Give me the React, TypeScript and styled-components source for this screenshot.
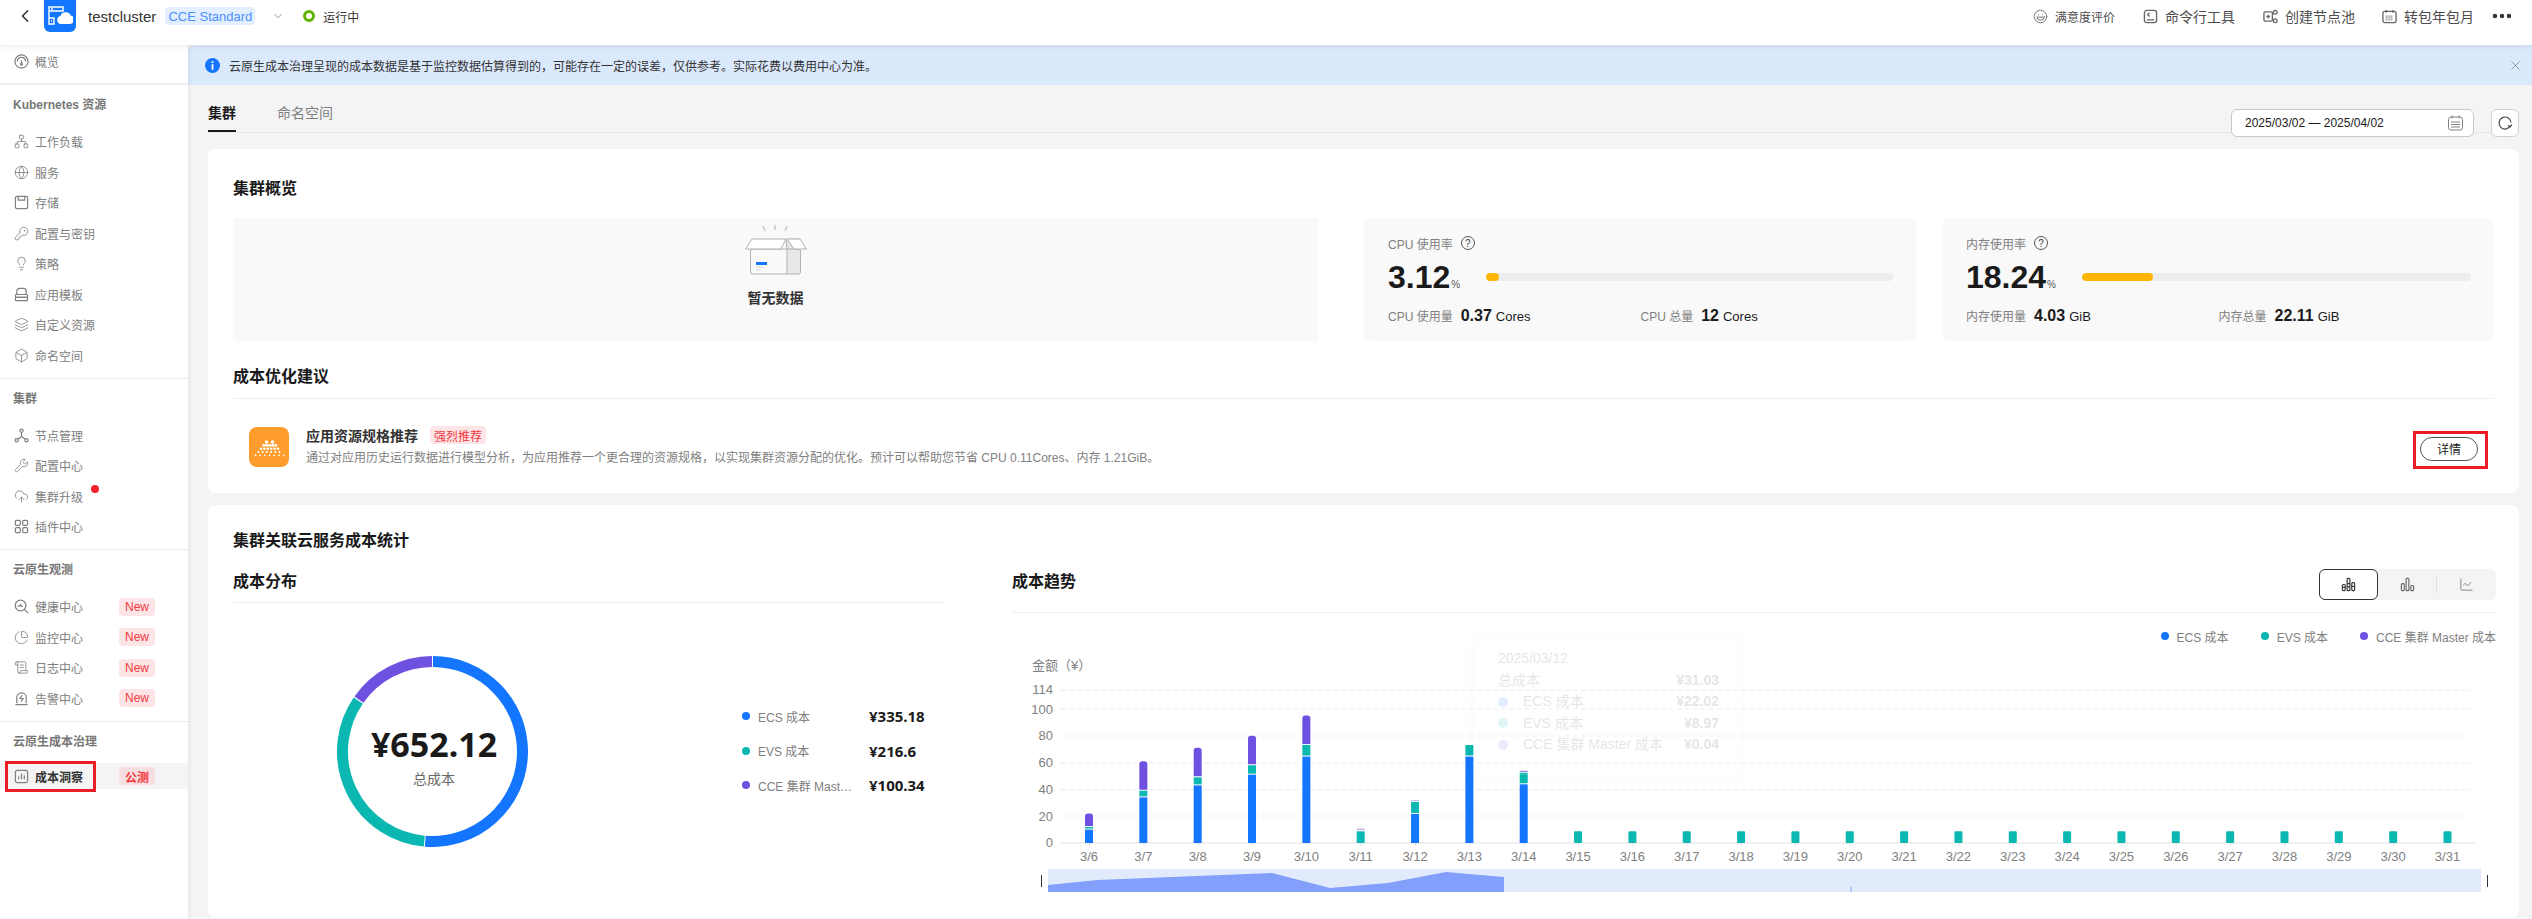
import * as React from 'react';
import styled, { createGlobalStyle } from 'styled-components';
import {
  Box,
  ChevronDown,
  ChevronLeft,
  ChartLine,
  ChartPie,
  CloudUpload,
  Ellipsis,
  Globe,
  KeyRound,
  Laugh,
  Layers,
  Lightbulb,
  Network,
  ScrollText,
  Wrench,
  X,
} from 'lucide-react';

const BLUE = '#1476ff';
const TEAL = '#0bb8b1';
const PURPLE = '#6e51e0';

const GlobalStyle = createGlobalStyle`
  html, body {
    margin: 0;
    padding: 0;
    height: 100%;
    overflow: hidden;
    background: #f4f4f4;
    font-family: "Liberation Sans", "Noto Sans CJK SC", sans-serif;
    font-size: 12px;
    color: #1a1a1a;
  }
  * {
    box-sizing: border-box;
  }
`;

const Page = styled.div`
  display: flex;
  flex-direction: column;
  height: 919px;
  overflow: hidden;
`;

/* top bar */

const TopBar = styled.header`
  display: flex;
  align-items: flex-start;
  flex: none;
  height: 45px;
  padding: 0 18px 0 15px;
  background: #fff;
  box-shadow: 0 2px 6px rgba(0, 0, 0, 0.07);
  position: relative;
  z-index: 5;
`;

const TopLeft = styled.div`
  display: flex;
  align-items: center;
  height: 32px;
  color: #333;
`;

const LogoTile = styled.div`
  display: flex;
  align-items: center;
  justify-content: center;
  width: 32px;
  height: 32px;
  margin: 0 12px 0 9px;
  background: ${BLUE};
  border-radius: 0 0 6px 6px;
`;

const ClusterName = styled.span`
  font-size: 15px;
  color: #333;
`;

const EditionTag = styled.span`
  display: inline-flex;
  align-items: center;
  justify-content: center;
  width: 90px;
  height: 18px;
  margin: 0 16px 0 9px;
  border-radius: 4px;
  background: #e3eeff;
  color: #4a90ff;
  font-size: 13px;
`;

const StatusRing = styled.span`
  width: 12px;
  height: 12px;
  margin: 0 8px 0 18px;
  border: 3px solid #5fb400;
  border-radius: 50%;
`;

const TopRight = styled.div`
  display: flex;
  align-items: center;
  height: 32px;
  margin-left: auto;
  color: #4d4d4d;
`;

const TopAction = styled.span<{ $small?: boolean; $gap?: number }>`
  display: inline-flex;
  align-items: center;
  gap: 7px;
  margin-right: ${(p) => p.$gap ?? 27}px;
  font-size: ${(p) => (p.$small ? 12 : 14)}px;
  white-space: nowrap;

  svg {
    width: 15px;
    height: 15px;
    color: #666;
    stroke-width: 1.4;
  }
`;

/* sidebar */

const Body = styled.div`
  display: flex;
  flex: 1;
  min-height: 0;
`;

const Sidebar = styled.nav`
  flex: none;
  width: 188px;
  background: #fff;
  box-shadow: 1px 0 4px rgba(0, 0, 0, 0.07);
  position: relative;
  z-index: 2;
`;

const SideTop = styled.div`
  height: 40px;
  padding-top: 1px;
  border-bottom: 2px solid #f0f0f0;
`;

const SideGroup = styled.div<{ $last?: boolean }>`
  padding: 10px 0 7px;
  border-bottom: ${(p) => (p.$last ? 'none' : '1px solid #ececec')};
`;

const SideHeading = styled.div`
  height: 20px;
  margin-bottom: 11.5px;
  padding-left: 13px;
  font-weight: 700;
  line-height: 20px;
  color: #777;
`;

const SideItem = styled.div<{ $active?: boolean }>`
  display: grid;
  grid-template-columns: 15px 84px 36px;
  column-gap: 6px;
  align-items: center;
  position: relative;
  height: ${(p) => (p.$active ? '26px' : '30.5px')};
  margin-top: ${(p) => (p.$active ? '3.5px' : 0)};
  padding-left: 14px;
  background: ${(p) => (p.$active ? '#f4f4f4' : 'transparent')};
  color: ${(p) => (p.$active ? '#333' : '#808080')};
  font-weight: ${(p) => (p.$active ? 700 : 400)};

  svg {
    width: 15px;
    height: 15px;
    color: #808080;
    stroke-width: 1.3;
  }
`;

const SideName = styled.span`
  grid-column: 2;
  white-space: nowrap;
  position: relative;
`;

const SideBadge = styled.span<{ $dim?: boolean }>`
  display: inline-flex;
  align-items: center;
  justify-content: center;
  width: 36px;
  height: 18px;
  margin-left: -6px;
  border-radius: 4px;
  background: ${(p) => (p.$dim ? '#f5dfe0' : '#fde4e6')};
  color: #f5393f;
  font-size: 12px;
  font-weight: ${(p) => (p.$dim ? 700 : 400)};
`;

const AlertDot = styled.span`
  position: absolute;
  top: -3px;
  left: 56px;
  width: 8px;
  height: 8px;
  border-radius: 50%;
  background: #f5222d;
`;

const Callout = styled.span<{ $left: number; $top: number; $w: number; $h: number }>`
  position: absolute;
  left: ${(p) => p.$left}px;
  top: ${(p) => p.$top}px;
  width: ${(p) => p.$w}px;
  height: ${(p) => p.$h}px;
  border: 3px solid #ec1c24;
  pointer-events: none;
`;

/* main */

const Main = styled.main`
  flex: 1;
  min-width: 0;
  background: #f4f4f4;
`;

const Banner = styled.div`
  display: flex;
  align-items: center;
  height: 40px;
  padding: 0 9px 0 17px;
  background: #dbe9fd;
  border-top-left-radius: 6px;
  color: #333;

  & > span {
    margin-left: 9px;
    flex: 1;
  }
`;

const Content = styled.div`
  padding: 0 13px 0 20px;
`;

const TabRow = styled.div`
  display: flex;
  align-items: flex-start;
  justify-content: space-between;
  height: 48px;
  padding-top: 17px;
  border-bottom: 1px solid #e8e8e8;
`;

const Tabs = styled.div`
  display: flex;
  gap: 41px;
`;

const Tab = styled.div<{ $active?: boolean }>`
  height: 30px;
  padding-bottom: 6px;
  border-bottom: 2px solid ${(p) => (p.$active ? '#1a1a1a' : 'transparent')};
  font-size: 14px;
  line-height: 22px;
  font-weight: ${(p) => (p.$active ? 700 : 400)};
  color: ${(p) => (p.$active ? '#1a1a1a' : '#808080')};
`;

const DateTools = styled.div`
  display: flex;
  gap: 17px;
  margin-top: 7px;
`;

const DateInput = styled.div`
  display: flex;
  align-items: center;
  justify-content: space-between;
  width: 243px;
  height: 28px;
  padding: 0 10px 0 13px;
  background: #fff;
  border: 1px solid #c8c8c8;
  border-radius: 6px;
  font-size: 12px;
  color: #1a1a1a;
`;

const RefreshButton = styled.div`
  display: flex;
  align-items: center;
  justify-content: center;
  width: 28px;
  height: 28px;
  background: #fff;
  border: 1px solid #d0d0d0;
  border-radius: 6px;
`;

const Card = styled.section`
  margin-top: 12px;
  padding: 24px 25px 0;
  background: #fff;
  border-radius: 8px;
`;

const TopCard = styled(Card)`
  margin-top: 16px;
  height: 344px;
  padding-top: 28px;
`;

const BottomCard = styled(Card)`
  height: 413px;
`;

const CardTitle = styled.h2`
  margin: 0;
  font-size: 16px;
  line-height: 24px;
  font-weight: 700;
  color: #1a1a1a;
`;

const OverviewRow = styled.div`
  display: flex;
  gap: 26px;
  margin-top: 17px;
  height: 123px;
`;

const EmptyPanel = styled.div`
  display: flex;
  flex-direction: column;
  align-items: center;
  flex: none;
  width: 1085px;
  margin-right: 20px;
  padding-top: 7px;
  background: #f9f9f9;
  border-radius: 2px;
`;

const EmptyText = styled.div`
  margin-top: 13px;
  font-size: 14px;
  font-weight: 700;
  line-height: 20px;
  color: #333;
`;

const MetricCard = styled.div`
  flex: 1;
  padding: 16px 23px 0 24px;
  background: #f9f9f9;
  border-radius: 8px;
`;

const MetricLabel = styled.div`
  display: flex;
  align-items: center;
  gap: 8px;
  height: 18px;
  color: #808080;
`;

const HelpMark = styled.span`
  display: inline-flex;
  align-items: center;
  justify-content: center;
  width: 14px;
  height: 14px;
  border: 1px solid #555;
  border-radius: 50%;
  font-size: 10px;
  color: #444;
`;

const MetricMain = styled.div`
  display: flex;
  align-items: center;
  gap: 26px;
  height: 36px;
  margin-top: 7px;
`;

const BigValue = styled.div`
  display: flex;
  align-items: flex-end;
  flex: none;
  font-size: 32px;
  font-weight: 700;
  line-height: 36px;
  color: #1a1a1a;

  small {
    margin: 0 0 5px 1px;
    font-size: 10px;
    line-height: 10px;
    font-weight: 400;
    color: #555;
  }
`;

const BarTrack = styled.div`
  flex: 1;
  height: 8px;
  background: #ededed;
  border-radius: 4px;
  overflow: hidden;
`;

const BarFill = styled.div`
  height: 100%;
  background: #ffb400;
  border-radius: 4px;
`;

const MetricFoot = styled.div`
  display: grid;
  grid-template-columns: 1fr 1fr;
  margin-top: 11px;
  line-height: 20px;
`;

const FootItem = styled.div`
  display: flex;
  align-items: baseline;
  gap: 8px;
  color: #808080;

  b {
    font-size: 16px;
    color: #1a1a1a;
  }

  em {
    margin-left: -4px;
    font-size: 13px;
    font-style: normal;
    color: #1a1a1a;
  }
`;

const SectionHead = styled.div`
  margin-top: 24px;
  padding-bottom: 9px;
  border-bottom: 1px solid #eeeeee;
`;

const AdviceRow = styled.div`
  display: flex;
  align-items: center;
  margin-top: 27px;
  padding: 0 16px;
  position: relative;
`;

const AdviceTile = styled.div`
  flex: none;
  width: 40px;
  height: 40px;
  margin-right: 17px;
  background: #ff9c2e;
  border-radius: 8px;
`;

const AdviceText = styled.div`
  flex: 1;
`;

const AdviceTitle = styled.div`
  display: flex;
  align-items: center;
  gap: 12px;
  height: 18px;
  font-size: 14px;
  font-weight: 700;
  color: #333;
`;

const StrongTag = styled.span`
  display: inline-flex;
  align-items: center;
  justify-content: center;
  width: 56px;
  height: 18px;
  border-radius: 4px;
  background: #fde4e6;
  color: #f5393f;
  font-size: 12px;
  font-weight: 400;
`;

const AdviceDesc = styled.div`
  margin-top: 5px;
  line-height: 18px;
  color: #808080;
  white-space: nowrap;
`;

const DetailButton = styled.div`
  display: flex;
  align-items: center;
  justify-content: center;
  width: 58px;
  height: 24px;
  border: 1px solid #555;
  border-radius: 12px;
  background: #fff;
  color: #1a1a1a;
  position: relative;
  top: 2px;
`;

/* cost section */

const CostGrid = styled.div`
  display: grid;
  grid-template-columns: 713px 1fr;
  column-gap: 66px;
  margin-top: 16px;
  margin-right: -1px;
`;

const SubHead = styled.div<{ $pad: number }>`
  display: flex;
  align-items: flex-start;
  justify-content: space-between;
  padding-bottom: ${(p) => p.$pad}px;
  border-bottom: 1px solid #eeeeee;
`;

const SubTitle = styled.h3`
  margin: 1px 0 0;
  font-size: 16px;
  line-height: 24px;
  font-weight: 700;
  color: #1a1a1a;
`;

const DonutRow = styled.div`
  display: flex;
  align-items: center;
  margin-top: 53px;
  padding-left: 104px;
`;

const DonutWrap = styled.div`
  flex: none;
  width: 191px;
  height: 191px;
  margin-right: 214px;
  position: relative;
`;

const DonutCenter = styled.div`
  position: absolute;
  inset: 0;
  display: flex;
  flex-direction: column;
  align-items: center;
  justify-content: center;
  padding-left: 3px;
`;

const DonutValue = styled.div`
  font-family: "Noto Sans", "Noto Sans CJK SC", sans-serif;
  font-size: 34px;
  font-weight: 700;
  line-height: 48px;
  margin-top: 4px;
  color: #1a1a1a;
`;

const DonutCaption = styled.div`
  margin-top: 2px;
  font-size: 14px;
  line-height: 18px;
  color: #666;
`;

const CostLegend = styled.div`
  display: grid;
  grid-template-columns: 127px auto;
  grid-auto-rows: 34.5px;
  align-items: center;
  margin-top: -2px;
`;

const LegendLabel = styled.div`
  display: flex;
  align-items: center;
  gap: 8px;
  color: #808080;
  white-space: nowrap;
  min-width: 0;

  span:last-child {
    max-width: 99px;
    overflow: hidden;
    text-overflow: ellipsis;
  }
`;

const Dot = styled.span<{ $color: string }>`
  flex: none;
  width: 8px;
  height: 8px;
  border-radius: 50%;
  background: ${(p) => p.$color};
`;

const LegendAmount = styled.div`
  font-family: "Noto Sans", "Noto Sans CJK SC", sans-serif;
  font-size: 15px;
  font-weight: 700;
  color: #1a1a1a;
`;

const ChartSwitch = styled.div`
  display: flex;
  align-items: center;
  width: 177px;
  height: 31px;
  background: #f4f4f4;
  border-radius: 6px;
`;

const SwitchOption = styled.div<{ $active?: boolean }>`
  display: flex;
  align-items: center;
  justify-content: center;
  width: 59px;
  height: 31px;
  border: 1px solid ${(p) => (p.$active ? '#333' : 'transparent')};
  border-radius: 6px;
  background: ${(p) => (p.$active ? '#fff' : 'transparent')};
  color: ${(p) => (p.$active ? '#333' : '#666')};

  svg {
    width: 15px;
    height: 15px;
    stroke-width: 1.2;
  }
`;

const SwitchDivider = styled.span`
  width: 1px;
  height: 17px;
  background: #e0e0e0;
`;

const TrendLegend = styled.div`
  display: flex;
  justify-content: flex-end;
  gap: 32px;
  height: 22px;
  margin-top: 12px;
  align-items: center;
  color: #808080;
`;

const TrendLegendItem = styled.div`
  display: flex;
  align-items: center;
  gap: 8px;
`;

const ChartWrap = styled.div`
  position: relative;
  margin-top: 3px;
  height: 250px;
`;

const GhostTip = styled.div`
  position: absolute;
  left: 463px;
  top: -10px;
  width: 265px;
  height: 135px;
  padding: 8px 21px 0 23px;
  background: #fff;
  box-shadow: 0 0 10px rgba(0, 0, 0, 0.12);
  border-radius: 6px;
  font-size: 14px;
  line-height: 21.5px;
  color: #333;
  opacity: 0.12;
`;

const TipRow = styled.div`
  display: flex;
  align-items: center;
  justify-content: space-between;
  white-space: nowrap;

  & > span:last-child {
    font-weight: 700;
  }
`;

const TipLabel = styled.span`
  display: flex;
  align-items: center;
  gap: 15px;

  i {
    display: block;
    width: 10px;
    height: 10px;
    border-radius: 50%;
  }
`;

/* drawings */

const LogoMark = () => (
  <svg width="26" height="26" viewBox="0 0 26 26" fill="none">
    <path d="M2 4h14v4H2zM2 15h5v6H2zM2 8v7" stroke="#fff" strokeWidth="1.4" />
    <path d="M4 6h2M4 18h1" stroke="#fff" strokeWidth="1.4" />
    <path
      d="M12 22a4 4 0 0 1-.6-7.9 5.5 5.5 0 0 1 10.3-.6A4.3 4.3 0 0 1 21 22z"
      fill="#fff"
      transform="translate(2 -1)"
    />
  </svg>
);

const OverviewIcon = () => (
  <svg viewBox="0 0 16 16" fill="none" stroke="currentColor">
    <circle cx="8" cy="8" r="7" />
    <path d="M3.5 8a4.5 4.5 0 0 1 9 0M8 7v4" />
    <circle cx="8" cy="11" r="1" />
  </svg>
);

const StoreIcon = () => (
  <svg viewBox="0 0 16 16" fill="none" stroke="currentColor">
    <rect x="1.5" y="1.5" width="13" height="13" rx="1.5" />
    <path d="M4.5 1.5v4h7v-4" />
  </svg>
);

const TemplateIcon = () => (
  <svg viewBox="0 0 16 16" fill="none" stroke="currentColor">
    <path d="M3 8V4.5A3 3 0 0 1 6 1.5h4a3 3 0 0 1 3 3V8" />
    <rect x="1.5" y="8" width="13" height="3" rx="1" />
    <rect x="1.5" y="11" width="13" height="3.5" rx="1" />
  </svg>
);

const NodesIcon = () => (
  <svg viewBox="0 0 16 16" fill="none" stroke="currentColor">
    <circle cx="8" cy="3" r="1.7" />
    <circle cx="2.7" cy="13" r="1.7" />
    <circle cx="13.3" cy="13" r="1.7" />
    <path d="M8 4.7V9L4 12M8 9l4 3" />
  </svg>
);

const PluginIcon = () => (
  <svg viewBox="0 0 16 16" fill="none" stroke="currentColor">
    <rect x="1.5" y="1.5" width="5.2" height="5.2" rx="1.2" />
    <rect x="9.3" y="1.5" width="5.2" height="5.2" rx="1.2" />
    <rect x="1.5" y="9.3" width="5.2" height="5.2" rx="1.2" />
    <rect x="9.3" y="9.3" width="5.2" height="5.2" rx="1.2" />
  </svg>
);

const HealthIcon = () => (
  <svg viewBox="0 0 16 16" fill="none" stroke="currentColor">
    <circle cx="7" cy="7" r="5.7" />
    <path d="M11.2 11.2L15 15M4 7.5h2l1-1.5 1 2h1.5" />
  </svg>
);

const AlarmIcon = () => (
  <svg viewBox="0 0 16 16" fill="none" stroke="currentColor">
    <path d="M3 13V7a5 5 0 0 1 10 0v6M1.5 14.5h13" />
    <path d="M8.6 4.5L6.4 8h3.2l-2.2 3.5" />
  </svg>
);

const InsightIcon = () => (
  <svg viewBox="0 0 16 16" fill="none" stroke="currentColor">
    <rect x="1.5" y="1.5" width="13" height="13" rx="2" />
    <path d="M5 11V8M8 11V5M11 11V7" />
  </svg>
);

const TerminalIcon = () => (
  <svg viewBox="0 0 16 16" fill="none" stroke="currentColor">
    <rect x="1.5" y="1.5" width="13" height="13" rx="2.5" />
    <path d="M7 4L5 6l2 2M4 11.5h8" />
  </svg>
);

const PoolIcon = () => (
  <svg viewBox="0 0 16 16" fill="none" stroke="currentColor">
    <rect x="1" y="3" width="9" height="10" rx="1.5" />
    <path d="M3.5 8h4M5.5 6v4" />
    <circle cx="13" cy="3.5" r="2" fill="#fff" />
    <circle cx="13" cy="12.5" r="2" fill="#fff" />
  </svg>
);

const MonthIcon = () => (
  <svg viewBox="0 0 16 16" fill="none" stroke="currentColor">
    <rect x="1" y="2.5" width="14" height="12" rx="2" />
    <path d="M4.5 1v3M11.5 1v3" />
    <path d="M4 7.5h8M4 9.5h8M4 11.5h8" strokeDasharray="1 1" />
  </svg>
);

const CalendarGlyph = () => (
  <svg width="15" height="16" viewBox="0 0 15 16" fill="none" stroke="#808080">
    <rect x="0.5" y="2" width="14" height="13" rx="2.5" />
    <path d="M4 0.5v3M11 0.5v3M3 7h9M3 9.5h9M3 12h9" />
  </svg>
);

const RefreshGlyph = () => (
  <svg width="16" height="16" viewBox="0 0 16 16" fill="none" stroke="#444" strokeWidth="1.2">
    <path d="M13.5 10.5A6 6 0 1 1 14 7.5" />
    <path d="M15 9.5l-1.6 2.2L11 10.5" />
  </svg>
);

const InfoGlyph = () => (
  <svg width="15" height="15" viewBox="0 0 15 15">
    <circle cx="7.5" cy="7.5" r="7.5" fill={BLUE} />
    <rect x="6.6" y="6.2" width="1.8" height="5.6" fill="#fff" />
    <rect x="6.6" y="3.2" width="1.8" height="1.8" fill="#fff" />
  </svg>
);

const EmptyBox = () => (
  <svg width="62" height="50" viewBox="0 0 62 50" fill="none" stroke="#a8a8a8" strokeWidth="0.9">
    <path d="M18 1l2 5M30 0v5M42 1l-2 5" />
    <path d="M42 14h13v34a2 2 0 0 1-2 2H42z" fill="#e8e8e8" stroke="none" transform="translate(0 -1)" />
    <rect x="5.5" y="24" width="50" height="25" rx="2" />
    <path d="M42 24v25" />
    <path d="M0.5 24L7 14h34l-5 10z" fill="#fff" />
    <path d="M42 14h13l6.5 10H49z" fill="#fff" />
    <path d="M41 14l1 10" />
    <rect x="11" y="37" width="11" height="3" fill={BLUE} stroke="none" />
    <path d="M11 42h8M11 45h4" stroke="#d0d0d0" />
  </svg>
);

// dot rows of the orange mountain mark, from the peak down
const dotRows = [
  { y: 15, r: 1.7, xs: [17.5, 23.5] },
  { y: 18.3, r: 1.5, xs: [14.7, 17.7, 20.7, 23.7, 26.7] },
  { y: 21.7, r: 1.3, xs: [12, 15.4, 18.8, 22.2, 25.6, 29] },
  { y: 25, r: 1, xs: [9.5, 13.7, 17.9, 22.1, 26.3, 30.5] },
  { y: 28.3, r: 0.9, xs: [6.5, 11.2, 15.9, 20.6, 25.3, 30, 34.7] },
];

const ResourceMark = () => (
  <svg width="40" height="40" viewBox="0 0 40 40" fill="#fff">
    {dotRows.map((row) =>
      row.xs.map((x) => <circle key={`${row.y}-${x}`} cx={x} cy={row.y} r={row.r} />),
    )}
  </svg>
);

const StackedGlyph = () => (
  <svg viewBox="0 0 16 16" fill="none" stroke="currentColor">
    <rect x="1.5" y="8" width="3" height="6.5" rx="1" />
    <path d="M1.5 11h3" />
    <rect x="6.5" y="1.5" width="3" height="13" rx="1" />
    <path d="M6.5 7h3M6.5 10.5h3" />
    <rect x="11.5" y="6" width="3" height="8.5" rx="1" />
    <path d="M11.5 10h3" />
  </svg>
);

const ClusteredGlyph = () => (
  <svg viewBox="0 0 16 16" fill="none" stroke="currentColor">
    <rect x="1.5" y="7" width="3" height="7.5" rx="1" />
    <rect x="6.5" y="1.5" width="3" height="13" rx="1" />
    <rect x="11.5" y="9" width="3" height="5.5" rx="1" />
  </svg>
);

/* polar helper for the ring segments */
const arcPath = (start: number, end: number, r: number, c: number) => {
  const pt = (deg: number) => {
    const a = ((deg - 90) * Math.PI) / 180;
    return `${c + r * Math.cos(a)} ${c + r * Math.sin(a)}`;
  };
  return `M${pt(start)}A${r} ${r} 0 ${end - start > 180 ? 1 : 0} 1 ${pt(end)}`;
};

const CostRing = () => (
  <svg width="191" height="191" viewBox="0 0 191 191" fill="none" strokeWidth="11">
    <path d={arcPath(0.3, 184.6, 90, 95.5)} stroke={BLUE} />
    <path d={arcPath(185.2, 304.4, 90, 95.5)} stroke={TEAL} />
    <path d={arcPath(305.2, 359.7, 90, 95.5)} stroke={PURPLE} />
  </svg>
);

/* trend chart */

type Day = { label: string; ecs: number; evs: number; cce: number; faint?: boolean };

const busyDays: Day[] = [
  { label: '3/6', ecs: 10, evs: 2, cce: 10 },
  { label: '3/7', ecs: 34, evs: 5, cce: 22 },
  { label: '3/8', ecs: 43, evs: 6, cce: 22 },
  { label: '3/9', ecs: 51, evs: 7, cce: 22 },
  { label: '3/10', ecs: 64.5, evs: 8.7, cce: 22 },
  { label: '3/11', ecs: 0, evs: 8.7, cce: 2.2, faint: true },
  { label: '3/12', ecs: 21.7, evs: 8.97, cce: 1.4, faint: true },
  { label: '3/13', ecs: 64.5, evs: 8.7, cce: 0 },
  { label: '3/14', ecs: 43.8, evs: 8.7, cce: 1.4 },
];

const quietDays: Day[] = Array.from({ length: 17 }, (_, i) => ({
  label: `3/${15 + i}`,
  ecs: 0,
  evs: 8.7,
  cce: 0,
}));

const days = [...busyDays, ...quietDays];

// chart coordinates: x from the section's left edge, y from the chart's top edge
const BASE_Y = 193;
const PER_UNIT = 1.34;
const FIRST_X = 77;
const STEP_X = 54.34;

const yScale = [
  { value: 114, y: 40.5, labelY: 39 },
  { value: 100, y: 59, labelY: 59 },
  { value: 80, y: 86, labelY: 85 },
  { value: 60, y: 113, labelY: 112 },
  { value: 40, y: 139.5, labelY: 139 },
  { value: 20, y: 166, labelY: 166 },
  { value: 0, y: 193, labelY: 192 },
];

const miniArea =
  'M36 235L85.5 230L260 223L318 238L376 233L434 222L492 227L492 242L36 242Z';

const topCapped = (x: number, y: number, w: number, h: number, r: number) =>
  `M${x} ${y + h}V${y + r}Q${x} ${y} ${x + r} ${y}H${x + w - r}Q${x + w} ${y} ${x + w} ${y + r}V${y + h}Z`;

const TrendChart = () => (
  <svg width="1484" height="250" viewBox="0 0 1484 250" fontSize="13" fill="#808080">
    <text x="20" y="20" fontSize="13">
      金额（¥）
    </text>
    {yScale.map((tick) => (
      <g key={tick.value}>
        <text x="41" y={tick.labelY + 5} textAnchor="end">
          {tick.value}
        </text>
        {tick.value === 0 ? (
          <line x1="49" x2="1463" y1={tick.y} y2={tick.y} stroke="#dfe1e6" strokeWidth="1.2" />
        ) : (
          <line x1="49" x2="1459" y1={tick.y} y2={tick.y} stroke="#e8e9ec" strokeDasharray="4 4" />
        )}
      </g>
    ))}
    {days.map((day, i) => {
      const cx = FIRST_X + STEP_X * i;
      const x = cx - 4;
      const ecsH = day.ecs * PER_UNIT;
      const evsH = day.evs * PER_UNIT;
      const cceH = day.cce * PER_UNIT;
      const evsTop = BASE_Y - ecsH - evsH;
      const cceTop = evsTop - cceH;
      return (
        <g key={day.label}>
          <line x1={cx + 0.5} x2={cx + 0.5} y1={BASE_Y} y2={BASE_Y + 3} stroke="#dfe1e6" />
          {ecsH > 0 && <rect x={x} y={BASE_Y - ecsH} width="8" height={ecsH} fill={BLUE} />}
          <rect
            x={x}
            y={evsTop}
            width="8"
            height={ecsH > 0 ? evsH - 1 : evsH}
            fill={TEAL}
            rx={day.cce ? 0 : 1}
          />
          {cceH > 0 && (
            <path
              d={topCapped(x, cceTop, 8, Math.max(cceH - 1, 1), cceH > 4 ? 3 : 1)}
              fill={day.faint ? '#c4b8f2' : PURPLE}
            />
          )}
          <text x={cx} y={BASE_Y + 18} textAnchor="middle">
            {day.label}
          </text>
        </g>
      );
    })}
    <rect x="36" y="219" width="1433" height="23" fill="#e2ebfb" />
    <path d={miniArea} fill="#819ffb" />
    <rect x="838.5" y="237" width="1" height="5" fill="#819ffb" />
    <rect x="23" y="219" width="13" height="23" fill="#fff" />
    <rect x="29" y="225" width="1" height="12" fill="#333" />
    <rect x="1469" y="219" width="13" height="23" fill="#fff" />
    <rect x="1475" y="225" width="1" height="12" fill="#333" />
  </svg>
);

/* data */

type NavEntry = { name: string; icon: React.ReactNode; badge?: string; dot?: boolean };

const navGroups: { title: string; items: NavEntry[] }[] = [
  {
    title: 'Kubernetes 资源',
    items: [
      { name: '工作负载', icon: <Network /> },
      { name: '服务', icon: <Globe /> },
      { name: '存储', icon: <StoreIcon /> },
      { name: '配置与密钥', icon: <KeyRound /> },
      { name: '策略', icon: <Lightbulb /> },
      { name: '应用模板', icon: <TemplateIcon /> },
      { name: '自定义资源', icon: <Layers /> },
      { name: '命名空间', icon: <Box /> },
    ],
  },
  {
    title: '集群',
    items: [
      { name: '节点管理', icon: <NodesIcon /> },
      { name: '配置中心', icon: <Wrench /> },
      { name: '集群升级', icon: <CloudUpload />, dot: true },
      { name: '插件中心', icon: <PluginIcon /> },
    ],
  },
  {
    title: '云原生观测',
    items: [
      { name: '健康中心', icon: <HealthIcon />, badge: 'New' },
      { name: '监控中心', icon: <ChartPie />, badge: 'New' },
      { name: '日志中心', icon: <ScrollText />, badge: 'New' },
      { name: '告警中心', icon: <AlarmIcon />, badge: 'New' },
    ],
  },
];

const metrics = [
  {
    title: 'CPU 使用率',
    value: '3.12',
    percent: 3.12,
    foot: [
      { label: 'CPU 使用量', value: '0.37', unit: 'Cores' },
      { label: 'CPU 总量', value: '12', unit: 'Cores' },
    ],
  },
  {
    title: '内存使用率',
    value: '18.24',
    percent: 18.24,
    foot: [
      { label: '内存使用量', value: '4.03', unit: 'GiB' },
      { label: '内存总量', value: '22.11', unit: 'GiB' },
    ],
  },
];

const costItems = [
  { name: 'ECS 成本', color: BLUE, amount: '¥335.18' },
  { name: 'EVS 成本', color: TEAL, amount: '¥216.6' },
  { name: 'CCE 集群 Master 成本', color: PURPLE, amount: '¥100.34' },
];

const tipItems = [
  { name: 'ECS 成本', color: BLUE, amount: '¥22.02' },
  { name: 'EVS 成本', color: TEAL, amount: '¥8.97' },
  { name: 'CCE 集群 Master 成本', color: PURPLE, amount: '¥0.04' },
];

const App = () => (
  <Page>
    <GlobalStyle />
    <TopBar>
      <TopLeft>
        <ChevronLeft size={20} strokeWidth={2} color="#333" />
        <LogoTile>
          <LogoMark />
        </LogoTile>
        <ClusterName>testcluster</ClusterName>
        <EditionTag>CCE Standard</EditionTag>
        <ChevronDown size={14} strokeWidth={1.3} color="#808080" />
        <StatusRing />
        <span>运行中</span>
      </TopLeft>
      <TopRight>
        <TopAction $small $gap={28}>
          <Laugh />
          满意度评价
        </TopAction>
        <TopAction $gap={28}>
          <TerminalIcon />
          命令行工具
        </TopAction>
        <TopAction>
          <PoolIcon />
          创建节点池
        </TopAction>
        <TopAction $gap={16}>
          <MonthIcon />
          转包年包月
        </TopAction>
        <Ellipsis size={24} strokeWidth={2.4} color="#333" />
      </TopRight>
    </TopBar>
    <Body>
      <Sidebar>
        <SideTop>
          <SideItem>
            <OverviewIcon />
            <SideName>概览</SideName>
          </SideItem>
        </SideTop>
        {navGroups.map((group) => (
          <SideGroup key={group.title}>
            <SideHeading>{group.title}</SideHeading>
            {group.items.map((item) => (
              <SideItem key={item.name}>
                {item.icon}
                <SideName>
                  {item.name}
                  {item.dot && <AlertDot />}
                </SideName>
                {item.badge && <SideBadge>{item.badge}</SideBadge>}
              </SideItem>
            ))}
          </SideGroup>
        ))}
        <SideGroup $last>
          <SideHeading>云原生成本治理</SideHeading>
          <SideItem $active>
            <InsightIcon />
            <SideName>成本洞察</SideName>
            <SideBadge $dim>公测</SideBadge>
            <Callout $left={5} $top={-2} $w={91} $h={31} />
          </SideItem>
        </SideGroup>
      </Sidebar>
      <Main>
        <Banner>
          <InfoGlyph />
          <span>
            云原生成本治理呈现的成本数据是基于监控数据估算得到的，可能存在一定的误差，仅供参考。实际花费以费用中心为准。
          </span>
          <X size={15} strokeWidth={1.3} color="#808080" />
        </Banner>
        <Content>
          <TabRow>
            <Tabs>
              <Tab $active>集群</Tab>
              <Tab>命名空间</Tab>
            </Tabs>
            <DateTools>
              <DateInput>
                2025/03/02 — 2025/04/02
                <CalendarGlyph />
              </DateInput>
              <RefreshButton>
                <RefreshGlyph />
              </RefreshButton>
            </DateTools>
          </TabRow>

          <TopCard>
            <CardTitle>集群概览</CardTitle>
            <OverviewRow>
              <EmptyPanel>
                <EmptyBox />
                <EmptyText>暂无数据</EmptyText>
              </EmptyPanel>
              {metrics.map((m) => (
                <MetricCard key={m.title}>
                  <MetricLabel>
                    {m.title}
                    <HelpMark>?</HelpMark>
                  </MetricLabel>
                  <MetricMain>
                    <BigValue>
                      {m.value}
                      <small>%</small>
                    </BigValue>
                    <BarTrack>
                      <BarFill style={{ width: `${m.percent}%` }} />
                    </BarTrack>
                  </MetricMain>
                  <MetricFoot>
                    {m.foot.map((f) => (
                      <FootItem key={f.label}>
                        {f.label}
                        <b>{f.value}</b>
                        <em>{f.unit}</em>
                      </FootItem>
                    ))}
                  </MetricFoot>
                </MetricCard>
              ))}
            </OverviewRow>
            <SectionHead>
              <CardTitle>成本优化建议</CardTitle>
            </SectionHead>
            <AdviceRow>
              <AdviceTile>
                <ResourceMark />
              </AdviceTile>
              <AdviceText>
                <AdviceTitle>
                  应用资源规格推荐
                  <StrongTag>强烈推荐</StrongTag>
                </AdviceTitle>
                <AdviceDesc>
                  通过对应用历史运行数据进行模型分析，为应用推荐一个更合理的资源规格，以实现集群资源分配的优化。预计可以帮助您节省
                  CPU 0.11Cores、内存 1.21GiB。
                </AdviceDesc>
              </AdviceText>
              <DetailButton>
                详情
                <Callout $left={-8} $top={-7} $w={75} $h={38} />
              </DetailButton>
            </AdviceRow>
          </TopCard>

          <BottomCard>
            <CardTitle>集群关联云服务成本统计</CardTitle>
            <CostGrid>
              <div>
                <SubHead $pad={8}>
                  <SubTitle>成本分布</SubTitle>
                </SubHead>
                <DonutRow>
                  <DonutWrap>
                    <CostRing />
                    <DonutCenter>
                      <DonutValue>¥652.12</DonutValue>
                      <DonutCaption>总成本</DonutCaption>
                    </DonutCenter>
                  </DonutWrap>
                  <CostLegend>
                    {costItems.map((c) => (
                      <React.Fragment key={c.name}>
                        <LegendLabel>
                          <Dot $color={c.color} />
                          <span>{c.name}</span>
                        </LegendLabel>
                        <LegendAmount>{c.amount}</LegendAmount>
                      </React.Fragment>
                    ))}
                  </CostLegend>
                </DonutRow>
              </div>
              <div>
                <SubHead $pad={12}>
                  <SubTitle>成本趋势</SubTitle>
                  <ChartSwitch>
                    <SwitchOption $active>
                      <StackedGlyph />
                    </SwitchOption>
                    <SwitchOption>
                      <ClusteredGlyph />
                    </SwitchOption>
                    <SwitchDivider />
                    <SwitchOption>
                      <ChartLine />
                    </SwitchOption>
                  </ChartSwitch>
                </SubHead>
                <TrendLegend>
                  {costItems.map((c) => (
                    <TrendLegendItem key={c.name}>
                      <Dot $color={c.color} />
                      {c.name}
                    </TrendLegendItem>
                  ))}
                </TrendLegend>
                <ChartWrap>
                  <TrendChart />
                  <GhostTip>
                    <div>2025/03/12</div>
                    <TipRow>
                      <span>总成本</span>
                      <span>¥31.03</span>
                    </TipRow>
                    {tipItems.map((t) => (
                      <TipRow key={t.name}>
                        <TipLabel>
                          <i style={{ background: t.color }} />
                          {t.name}
                        </TipLabel>
                        <span>{t.amount}</span>
                      </TipRow>
                    ))}
                  </GhostTip>
                </ChartWrap>
              </div>
            </CostGrid>
          </BottomCard>
        </Content>
      </Main>
    </Body>
  </Page>
);

export default App;
